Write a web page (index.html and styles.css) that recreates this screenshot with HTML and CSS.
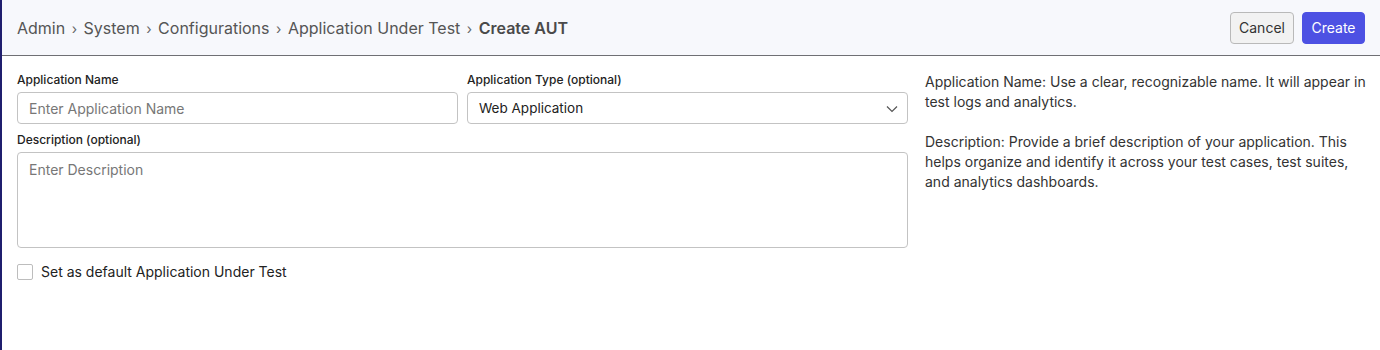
FILE: index.html
```html
<!DOCTYPE html>
<html>
<head>
<meta charset="utf-8">
<link rel="stylesheet" href="styles.css">
</head>
<body>
<div class="page">
  <header class="topbar">
    <nav class="crumbs">
      <span>Admin</span><span class="sep">›</span>
      <span>System</span><span class="sep">›</span>
      <span>Configurations</span><span class="sep">›</span>
      <span>Application Under Test</span><span class="sep">›</span>
      <span class="current">Create AUT</span>
    </nav>
    <div class="actions">
      <button class="btn btn-cancel">Cancel</button>
      <button class="btn btn-create">Create</button>
    </div>
  </header>
  <main class="content">
    <section class="form">
      <div class="row">
        <div class="field">
          <label class="label">Application Name</label>
          <div class="input placeholder">Enter Application Name</div>
        </div>
        <div class="field">
          <label class="label">Application Type (optional)</label>
          <div class="input select">
            <span>Web Application</span>
            <svg class="chev" width="12" height="8" viewBox="0 0 12 8"><path d="M1 1.5 L6 6.5 L11 1.5" fill="none" stroke="#555" stroke-width="1.2"/></svg>
          </div>
        </div>
      </div>
      <div class="field">
        <label class="label">Description (optional)</label>
        <div class="textarea placeholder">Enter Description</div>
      </div>
      <div class="check">
        <span class="box"></span>
        <span>Set as default Application Under Test</span>
      </div>
    </section>
    <aside class="help">
      <p>Application Name: Use a clear, recognizable name. It will appear in test logs and analytics.</p>
      <p>Description: Provide a brief description of your application. This helps organize and identify it across your test cases, test suites, and analytics dashboards.</p>
    </aside>
  </main>
</div>
</body>
</html>
```
FILE: styles.css
```css
* { box-sizing: border-box; }
html, body { margin: 0; padding: 0; }
body {
  font-family: Inter, "Noto Sans", sans-serif;
  color: #222;
  background: #fff;
}
.page {
  width: 1380px;
  height: 350px;
  border-left: 2px solid #1f1e6e;
}
.topbar {
  height: 56px;
  background: #f7f8fc;
  border-bottom: 1px solid #6f6f74;
  display: flex;
  align-items: center;
  justify-content: space-between;
  padding: 0 15px 0 15px;
}
.crumbs {
  font-size: 16px;
  color: #555;
  display: flex;
  align-items: center;
  gap: 6.5px;
  padding-top: 1px;
}
.crumbs .sep { color: #666; font-size: 14px; }
.crumbs .current { font-weight: 600; color: #4a4a4a; }
.actions { display: flex; gap: 8px; }
.btn {
  font-family: Inter, "Noto Sans", sans-serif;
  font-size: 14px;
  height: 32px;
  border-radius: 4px;
  padding: 0 8px;
  cursor: pointer;
}
.btn-cancel {
  background: #f2f2f2;
  border: 1px solid #b9b9b9;
  color: #333;
  width: 64px;
}
.btn-create {
  background: #4d51e3;
  border: 1px solid #4d51e3;
  color: #fff;
  width: 63px;
}
.content {
  display: flex;
  gap: 17px;
  padding: 0 15px;
}
.form {
  width: 891px;
  padding-top: 16px;
  display: flex;
  flex-direction: column;
}
.row { display: flex; gap: 9px; }
.row .field { flex: 1; }
.field { display: flex; flex-direction: column; }
.label {
  font-size: 12px;
  font-weight: 500;
  line-height: 16px;
  color: #222;
  margin-bottom: 4px;
}
.input {
  height: 32px;
  border: 1px solid #c3c3c3;
  border-radius: 4px;
  padding: 0 11px;
  font-size: 14px;
  display: flex;
  align-items: center;
}
.placeholder { color: #777; }
.select { justify-content: space-between; color: #222; font-size: 13.5px; padding-right: 9px; }
.select .chev { margin-top: 1px; }
.row + .field { margin-top: 8px; }
.textarea {
  height: 96px;
  border: 1px solid #c3c3c3;
  border-radius: 4px;
  padding: 8px 11px;
  font-size: 14px;
  line-height: 18px;
}
.check {
  margin-top: 15px;
  display: flex;
  align-items: center;
  gap: 8px;
  font-size: 14px;
  color: #222;
}
.box {
  width: 16px;
  height: 16px;
  border: 1px solid #bdbdbd;
  border-radius: 2px;
  background: #fff;
}
.help {
  flex: 1;
  margin-right: -10px;
  padding-top: 16px;
  font-size: 14px;
  line-height: 20px;
  color: #333;
}
.help p { margin: 0 0 20px 0; }
```
